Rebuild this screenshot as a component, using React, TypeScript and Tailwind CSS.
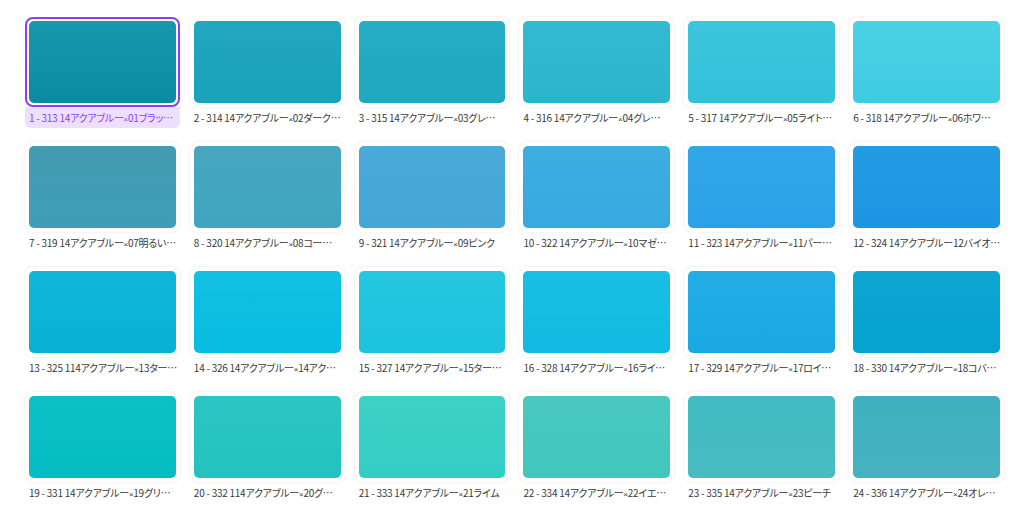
import React from "react";

type Item = { label: string; sw: string };

const items: Item[] = [
  { label: "1 - 313 14アクアブルー×01ブラッ…", sw: "bg-linear-to-b from-[#1898ad] to-[#078ca3]" },
  { label: "2 - 314 14アクアブルー×02ダーク…", sw: "bg-linear-to-b from-[#21a7be] to-[#1aa2bb]" },
  { label: "3 - 315 14アクアブルー×03グレ…", sw: "bg-linear-to-b from-[#26adc5] to-[#20a8c1]" },
  { label: "4 - 316 14アクアブルー×04グレ…", sw: "bg-linear-to-b from-[#33bad1] to-[#2bb5cd]" },
  { label: "5 - 317 14アクアブルー×05ライト…", sw: "bg-linear-to-b from-[#3cc6dd] to-[#33c0d9]" },
  { label: "6 - 318 14アクアブルー×06ホワ…", sw: "bg-linear-to-b from-[#4ad1e6] to-[#40cbe2]" },
  { label: "7 - 319 14アクアブルー×07明るい…", sw: "bg-linear-to-b from-[#449bb3] to-[#3f9fb8]" },
  { label: "8 - 320 14アクアブルー×08コー…", sw: "bg-linear-to-b from-[#47a7bf] to-[#40a5bf]" },
  { label: "9 - 321 14アクアブルー×09ピンク", sw: "bg-linear-to-b from-[#4aaad8] to-[#44a7d8]" },
  { label: "10 - 322 14アクアブルー×10マゼ…", sw: "bg-linear-to-b from-[#3eaee0] to-[#36a9e0]" },
  { label: "11 - 323 14アクアブルー×11パー…", sw: "bg-linear-to-b from-[#32a6e8] to-[#2aa1e8]" },
  { label: "12 - 324 14アクアブルー12バイオ…", sw: "bg-linear-to-b from-[#249ce4] to-[#1b96e2]" },
  { label: "13 - 325 114アクアブルー×13ター…", sw: "bg-linear-to-b from-[#10b6d7] to-[#08b2d4]" },
  { label: "14 - 326 14アクアブルー×14アク…", sw: "bg-linear-to-b from-[#12c0e3] to-[#08bce2]" },
  { label: "15 - 327 14アクアブルー×15ター…", sw: "bg-linear-to-b from-[#25c7e1] to-[#1dc2df]" },
  { label: "16 - 328 14アクアブルー×16ライ…", sw: "bg-linear-to-b from-[#19bfe4] to-[#11bae3]" },
  { label: "17 - 329 14アクアブルー×17ロイ…", sw: "bg-linear-to-b from-[#22ade4] to-[#1aa8e3]" },
  { label: "18 - 330 14アクアブルー×18コバ…", sw: "bg-linear-to-b from-[#0ca6d2] to-[#05a1cf]" },
  { label: "19 - 331 14アクアブルー×19グリ…", sw: "bg-linear-to-b from-[#0cc0c6] to-[#05bcc3]" },
  { label: "20 - 332 114アクアブルー×20グ…", sw: "bg-linear-to-b from-[#2cc6c2] to-[#23c2bf]" },
  { label: "21 - 333 14アクアブルー×21ライム", sw: "bg-linear-to-b from-[#3dd1c7] to-[#34cdc4]" },
  { label: "22 - 334 14アクアブルー×22イエ…", sw: "bg-linear-to-b from-[#49c9c0] to-[#42c6bd]" },
  { label: "23 - 335 14アクアブルー×23ピーチ", sw: "bg-linear-to-b from-[#42bbc3] to-[#47bdc1]" },
  { label: "24 - 336 14アクアブルー×24オレ…", sw: "bg-linear-to-b from-[#40b0c0] to-[#45b2be]" },
];

function Label({ text }: { text: string }) {
  const parts = text.split("×");
  if (parts.length === 1) return <>{text}</>;
  return (
    <>
      {parts[0]}
      <span className="text-[8px]" style={{ fontFamily: '"Liberation Sans", sans-serif' }}>
        ×
      </span>
      {parts[1]}
    </>
  );
}

function Tile({ item, selected }: { item: Item; selected: boolean }) {
  return (
    <div className="flex flex-col">
      <div
        className={
          selected
            ? "h-[90px] rounded-[8px] border-2 border-[#8b3dff] bg-white p-[2px]"
            : "h-[90px] rounded-[8px] bg-white p-[4px] shadow-[0_0_3px_rgba(0,0,0,0.1)]"
        }
      >
        <div className={"h-full w-full rounded-[5px] " + item.sw} />
      </div>
      <div
        className={
          selected
            ? "h-[21px] rounded-b-[6px] bg-[#ecdfff] px-[4px] text-[10px] leading-[21px] text-[#8b3dff] whitespace-nowrap overflow-hidden [font-feature-settings:'palt'] tracking-[-0.25px]"
            : "h-[21px] px-[4px] text-[10px] leading-[21px] text-[#3a3a3a] whitespace-nowrap overflow-hidden [font-feature-settings:'palt'] tracking-[-0.25px]"
        }
      >
        <Label text={item.label} />
      </div>
    </div>
  );
}

export default function App() {
  return (
    <div
      className="w-[1024px] h-[511px] overflow-hidden bg-white pt-[17px] pl-[25px] pr-[20px]"
      style={{ fontFamily: '"Noto Sans CJK JP", "Noto Sans", sans-serif' }}
    >
      <div className="grid grid-cols-6 gap-x-[10px] gap-y-[14px]">
        {items.map((it, i) => (
          <Tile key={i} item={it} selected={i === 0} />
        ))}
      </div>
    </div>
  );
}
